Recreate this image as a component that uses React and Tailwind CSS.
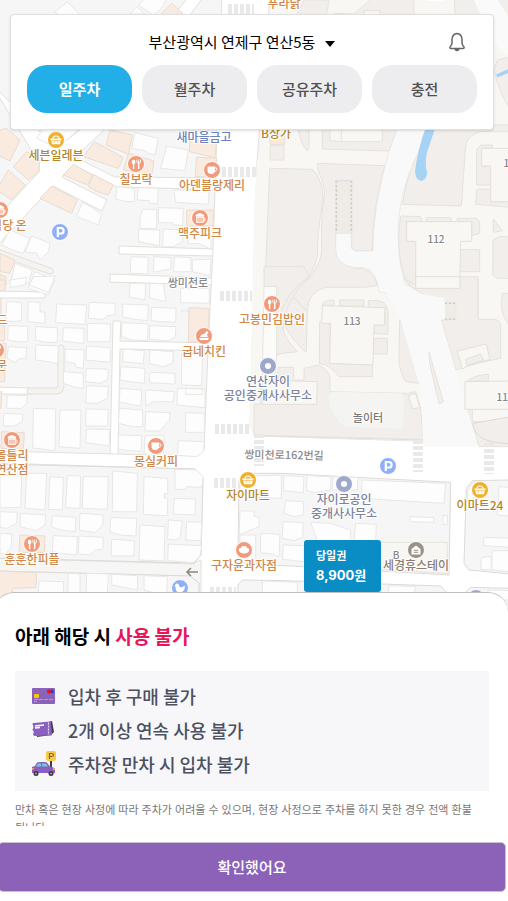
import React, { useState } from 'react';

const TABS = ['일주차', '월주차', '공유주차', '충전'];

const COLORS = {
  food: { pin: '#f09b7b', text: '#cf8748' },
  mart: { pin: '#efb02e', text: '#b3852a' },
  office: { pin: '#9da8cb', text: '#7b829c' },
  stay: { pin: '#9b9186', text: '#8b7b70' },
  parking: { pin: '#8fb0f6', text: '#8fb0f6' },
};

const PLACES = [
  { x: 56, y: 140, type: 'mart', icon: 'basket', lines: ['세븐일레븐'] },
  { x: 136, y: 164, type: 'food', icon: 'fork', lines: ['칠보락'] },
  { x: 212, y: 170, type: 'food', icon: 'cup', lines: ['아덴블랑제리'] },
  { x: 200, y: 218, type: 'food', icon: 'beer', lines: ['맥주피크'] },
  { x: 0, y: 210, type: 'food', icon: 'beer', lines: ['식당 온'], labelX: 9 },
  { x: 60, y: 232, type: 'parking', icon: 'p', lines: [] },
  { x: 204, y: 336, type: 'food', icon: 'chicken', lines: ['굽네치킨'] },
  { x: 272, y: 304, type: 'food', icon: 'fork', lines: ['고봉민김밥인'] },
  { x: -4, y: 350, type: 'food', icon: 'fork', lines: ['전문'] },
  { x: 268, y: 366, type: 'office', icon: 'dot', lines: ['연산자이', '공인중개사사무소'] },
  { x: 12, y: 440, type: 'food', icon: 'beer', lines: ['몰틀리', '연산점'] },
  { x: 156, y: 446, type: 'food', icon: 'cup', lines: ['몽실커피'] },
  { x: 248, y: 480, type: 'mart', icon: 'basket', lines: ['자이마트'] },
  { x: 344, y: 484, type: 'office', icon: 'dot', lines: ['자이로공인', '중개사사무소'] },
  { x: 388, y: 466, type: 'parking', icon: 'p', lines: [] },
  { x: 480, y: 490, type: 'mart', icon: 'basket', lines: ['이마트24'] },
  { x: 32, y: 544, type: 'food', icon: 'fork', lines: ['훈훈한피플'] },
  { x: 244, y: 550, type: 'food', icon: 'bread', lines: ['구자윤과자점'] },
  { x: 416, y: 550, type: 'stay', icon: 'house', lines: ['세경휴스테이'] },
  { x: 180, y: 588, type: 'parking', icon: 'duck', lines: [] },
  { x: 476, y: 598, type: 'office', icon: 'dot', lines: [] },
];

// Outlines are stored per map tile, three units to one pixel
const TILES = [
  {
    x: 0, y: 0,
    lots: ['165,35 202,6 238,42 200,70', '415,15 440,-10 505,-10 480,30 460,45', '390,42 410,20 435,42'],
    shops: ['480,45 515,10 548,40 530,60'],
  },
  {
    x: 0, y: 125,
    lots: [
      '110,40 150,-20 240,10 172,70', '405,23 475,40 465,90 442,85 440,78 395,70', '500,63 565,75 555,137 482,130',
      '350,185 403,190 403,230 368,228 347,222', '415,188 475,190 472,237 450,235 448,227 412,225', '522,195 627,197 625,238 527,232',
      '247,232 272,245 305,268 295,300 275,292 230,275', '427,253 470,253 470,310 420,310 420,280', '475,248 550,250 548,302 520,300 518,293 475,293',
      '415,313 480,315 478,362 440,355 415,350', '490,312 548,315 548,350 520,365 488,365', '565,310 633,305 633,372 595,355 565,357',
      '30,315 90,340 70,385 50,380 5,360', '95,333 150,355 145,380 120,405 110,385 75,380', '45,415 97,435 85,475 33,470',
      '105,440 165,465 145,510 85,490', '393,395 445,397 443,447 391,445', '462,395 513,398 513,432 470,440 460,440',
      '523,395 573,398 573,440 521,440', '577,405 633,402 630,452 577,440',
    ],
    shops: [
      '0,15 20,10 60,45 30,108 -10,90', '80,80 118,105 118,140 85,165 40,125', '25,135 75,180 35,225 -10,195',
      '330,15 397,30 385,88 318,60', '283,50 370,97 355,130 250,95', '220,118 278,150 262,180 190,150',
      '280,148 340,180 325,210 290,200 265,185', '155,183 232,225 215,265 120,220', '570,45 650,45 645,98 568,80',
      '385,85 462,108 455,150 370,135', '590,97 650,100 645,155 585,155', '560,255 640,255 640,303 560,303', '0,385 45,405 30,445 0,440',
      '0,448 18,455 18,480 0,480',
    ],
  },
  {
    x: 0, y: 280,
    lots: [
      '390,10 437,10 435,60 410,55 388,52', '450,10 490,12 498,65 475,60 448,52', '542,25 628,25 628,70 542,68',
      '20,65 65,67 65,122 38,125 18,122', '85,65 120,67 120,95 135,97 135,130 83,125', '170,72 260,75 255,133 167,128',
      '268,67 345,70 345,105 320,107 310,118 265,115', '368,72 445,75 443,122 420,120 368,112', '455,82 528,85 527,127 480,125 453,122',
      '25,137 83,139 83,185 50,185 23,180', '107,140 172,143 172,187 135,187 107,180', '190,143 252,145 252,190 225,188 188,183',
      '262,130 332,132 330,185 262,185', '365,128 445,132 443,182 395,180 365,170', '450,137 528,140 526,170 505,183 448,178',
      '25,200 80,203 78,235 55,237 45,248 22,235', '107,195 175,198 173,252 145,245 107,240', '195,208 253,210 250,265 228,262 225,250 195,245',
      '260,198 332,203 330,247 258,240', '370,207 433,212 430,252 400,248 367,245', '450,210 520,215 518,250 490,260 448,250',
      '545,220 608,222 605,317 545,315', '190,275 250,280 250,325 225,322 190,310', '258,265 325,268 323,300 300,310 257,305',
      '362,260 435,265 433,310 390,305 360,300', '450,277 525,280 525,312 448,308', '260,317 325,320 323,355 290,370 257,368',
      '360,325 425,330 423,378 400,375 358,365', '437,330 523,335 520,365 460,365 437,378', '533,325 615,327 615,383 530,375',
      '557,325 607,327 607,343 557,343', '22,345 83,347 80,370 65,385 20,385', '258,387 325,388 323,438 257,438',
      '358,385 428,390 428,440 400,440 355,430', '437,395 510,398 508,420 480,453 435,453', '557,398 613,400 613,457 557,457',
      '12,400 68,403 67,425 42,438 10,438', '100,385 167,387 165,512 98,504', '180,390 243,390 240,505 177,500',
      '260,447 328,449 328,498 257,488', '355,465 425,467 423,515 355,508', '435,467 492,467 490,525 432,522', '545,90 565,90 565,95 545,95',
      '30,0 80,-8 75,15 30,22', '100,-10 165,-12 145,38 88,15',
    ],
    shops: ['567,83 627,85 625,187 565,185', '-5,0 15,0 15,32 -5,32', '-5,55 3,55 3,100 -5,100', '-5,135 14,135 14,182 -5,182', '-5,190 18,190 14,305 -5,305', '-5,335 5,335 3,385 -5,385'],
  },
  {
    x: 0, y: 430,
    lots: [
      '535,32 613,35 610,65 590,80 532,76', '0,135 65,137 62,232 0,234', '80,130 140,130 135,240 75,235', '150,140 190,143 187,240 145,238',
      '202,137 242,138 240,235 197,233', '250,140 325,140 322,238 247,235', '338,123 412,130 410,245 337,245',
      '432,140 503,145 503,190 492,192 492,203 503,205 502,257 430,253', '525,118 590,120 610,142 605,172 560,170 556,178 525,178',
      '523,205 587,207 585,255 520,252', '0,245 52,247 50,280 20,295 0,292', '62,250 137,255 135,285 110,302 60,290',
      '157,257 228,262 225,305 180,300 155,290', '240,250 310,255 308,285 285,308 238,300', '332,263 410,265 408,318 360,315 330,305',
      '420,285 495,290 492,393 417,390', '505,270 547,273 540,325 525,330 503,328', '560,275 605,277 603,332 557,330',
      '335,328 403,332 402,378 333,378', '505,342 605,347 600,378 580,398 503,392', '160,317 232,320 230,375 185,370 157,365',
      '237,318 310,322 308,358 285,360 270,375 235,372', '0,310 35,312 33,355 15,372 0,370', '117,453 190,455 190,500 115,500',
      '205,430 240,432 240,500 203,500', '260,430 325,432 322,500 258,500', '335,433 413,437 412,480 385,475 335,465',
      '432,437 502,440 500,500 432,480',
    ],
    shops: ['5,5 73,8 70,58 3,55', '60,315 135,318 133,368 57,367', '-5,423 110,428 108,473 38,475 35,540 -5,540'],
  },
  {
    x: 254, y: 430,
    lots: [
      '-42,140 82,135 82,205 -42,200', '-42,243 0,243 0,258 15,262 15,290 -45,315', '90,137 150,140 148,188 88,182', '160,137 230,140 230,180 180,188 157,180',
      '238,140 312,143 310,180 235,180', '95,212 148,215 148,255 120,260 90,250', '325,150 575,160 570,220 320,205', '468,260 540,263 540,277 468,275',
      '567,255 580,257 580,283 567,283', '87,275 148,278 146,322 120,332 85,325', '170,277 230,280 290,300 290,332 190,332', '305,280 367,283 365,332 300,332',
      '20,310 78,313 75,380 55,372 20,368', '88,345 150,347 150,395 85,388', '-42,315 5,315 5,400 -42,400', '735,170 770,172 770,258 730,255',
      '690,322 770,325 770,352 688,347', '715,362 770,362 770,425 713,420', '695,380 712,380 712,420 680,418 682,385',
      '25,453 130,457 130,500 25,490', '310,465 380,467 380,500 310,500', '405,467 485,470 480,500 400,500', '702,480 770,482 770,510 702,510', '640,185 660,153 675,190 640,220',
    ],
    shops: [],
  },
];

const PinIcon = ({ name }) => {
  switch (name) {
    case 'basket':
      return (
        <g>
          <path d="M-5.500-1.500H5.500V0H4.800L4 4.300H-4L-4.800 0H-5.500Z" fill="#fff" />
          <path d="M-3.300-1.500Q-2.500-4 0-4T3.300-1.500" fill="none" stroke="#fff" strokeWidth="1.200" />
          <path d="M-4.500.5H4.500M-1.700 1V3M1.700 1V3" stroke="#efb02e" strokeWidth=".6" />
        </g>
      );
    case 'fork':
      return (
        <g stroke="#fff" strokeLinecap="round" fill="none">
          <ellipse cx="-2.4" cy="-2" rx="1.8" ry="2.2" fill="#fff" stroke="none" />
          <path d="M-2.4 0V4.5M2.7-1V4.5" strokeWidth="1.4" />
          <path d="M.9-4V-1.6Q2.7 1 4.5-1.6V-4M2.7-4V0" strokeWidth=".9" />
        </g>
      );
    case 'cup':
      return (
        <g>
          <path d="M-4.5-3.5H3V0Q3 4-.8 4T-4.5 0Z" fill="#fff" />
          <path d="M3-2.2Q5.5-2.5 5-.6T2.5 1.4" fill="none" stroke="#fff" />
        </g>
      );
    case 'beer':
      return (
        <g>
          <path d="M-4-1.5Q-5-4-2.5-4 0-6 2-4 4.5-4 4-1.5Z" fill="#fff" />
          <path d="M-3.2-.8V4.2H3.2V-.8Z" fill="none" stroke="#fff" strokeWidth="1.2" />
          <path d="M-1 0V3M1 0V3M3.5 0H5V3H3.5" fill="none" stroke="#fff" strokeWidth=".9" />
        </g>
      );
    case 'chicken':
      return (
        <g fill="#fff">
          <path d="M-4 1Q-3-2 0-2L3-5 4.5-3.5 3-1.5Q4 0 3.5 1.2Z" />
          <path d="M-5 2H5L4 4H-4Z" />
        </g>
      );
    case 'bread':
      return <path d="M-5 1Q-6-2-3-2-2-5 0-3.4 2.5-5 3-2 6-2 5 1 4 3.6 0 3.4T-5 1Z" fill="#fff" />;
    case 'house':
      return (
        <g>
          <path d="M-4.5-1 0-4.5 4.5-1V4.5H-4.5Z" fill="#fff" />
          <path d="M-2.3.3H2.3M-2.3 2.3H2.3" stroke="#9b9186" />
        </g>
      );
    case 'duck':
      return <path d="M-5.5-2-3.8-4.4Q-1-5-.7-1.6 2 .5 4.8-2.4 5.5 4 0 4.6-5 4.3-4.4-1Z" fill="#fff" />;
    case 'p':
      return <path d="M-2.2 5V-4H1Q3.6-4 3.6-1.2T1 1.5H-2" fill="none" stroke="#fff" strokeWidth="2.2" />;
    default:
      return <circle r="3" fill="#fff" />;
  }
};

const Label = ({ x, y, color, size = 12, weight = 500, children, ...rest }) => (
  <text
    x={x}
    y={y + 4}
    fill={color}
    fontSize={size}
    fontWeight={weight}
    textAnchor="middle"
    stroke="#ffffff"
    strokeWidth="2"
    strokeLinejoin="round"
    paintOrder="stroke"
    {...rest}
  >
    {children}
  </text>
);

const Tile = ({ x, y, children }) => <g transform={`translate(${x} ${y}) scale(0.33333)`}>{children}</g>;

const StreetMap = () => (
  <svg
    viewBox="0 0 508 620"
    preserveAspectRatio="xMinYMin slice"
    className="absolute inset-0 h-full w-full font-['Noto_Sans_CJK_KR',sans-serif]"
    role="img"
    aria-label="연산5동 지도"
  >
    <rect width="508" height="620" fill="#f6f6f6" />

    {/* Main road and the side streets */}
    <g fill="#ffffff" stroke="#e2e0db" strokeWidth="1">
      <path d="M-5 90 39 163V172L-5 219V248L53 186 102 211 107 200 62 177 73 165 117 187 230 190V178L115 177 75 157 104 130 205-5H190L80 130 56 148 0 92Z" />
      <path d="M119 246 215 249V256L119 254ZM110 274 215 278V285L110 282ZM-5 291 45 292V298H-5ZM-5 387 31 388V394H-5Z" />
      <path d="M113 321H121L120 341 215 343V351L120 349 118 460H110Z" />
      <path d="M-5 451 197 456 204 450 208 350 213 250 217 130 222-5H270L257 162 250 425 256 436 515 444V620H-5V571L190 576 199 583V620H201V560L194 563-5 558V463L195 469 203 478 201 555 194 563V564L-5 558Z" />
    </g>
    <g fill="#f6f6f6" stroke="#dddad5" strokeWidth="1">
      <path d="M-5 464 195 469 203 478 201 555 194 563-5 558ZM-5 571 190 576 199 583V620H-5Z" />
    </g>
    <g fill="none" strokeLinecap="round">
      <path d="M-3 252 50 271M30 391H56Q61 391 61 385V348" stroke="#e4e1da" strokeWidth="7" />
      <path d="M-3 252 50 271M30 391H56Q61 391 61 385V348" stroke="#f5f3ef" strokeWidth="5" />
    </g>

    {/* Apartment grounds on the east side */}
    <path d="M274-5H515V447L423 441 256 436Q248 430 250 420L254 210 257 162 263 142V60Z" fill="#f8f7f3" />
    <path d="M254 435.500 424 440" stroke="#dedbd2" />
    <Tile x={254} y={0}>
      <g fill="#f1eeeb" stroke="#e7e3de" strokeWidth="3">
        <path d="M150 0H225L215 60H120ZM240 40 300 42 360-10H480V60H240ZM600-10H660L710 60H605ZM730 180Q750 175 770 170V330Q735 280 720 210ZM725-10H770V90Z" />
      </g>
      <path d="M655-10H725L770 60V170L720 130Z" fill="#fafafa" />
      <path d="M728 228 770 210" stroke="#a6d2f4" strokeWidth="10" />
      <path d="M330 32H378V60H330Z" fill="#f8f7f3" stroke="#e2e0db" strokeWidth="3" />
    </Tile>
    <Tile x={254} y={125}>
      <g fill="#f1eeeb" stroke="#e6e2dc" strokeWidth="3">
        <path d="M47 130 175 133Q206 160 207 225 190 320 190 395 180 440 145 482L110 530 90 590 75 690H30L33 480Z" />
        <path d="M48 62H90V105H48ZM132 10H165V70L160 78Q140 60 132 10Z" />
        <path d="M190 115 393 122Q355 250 355 378H305L293 370V167H247V370Q250 420 300 428 360 428 370 480V482L330 487H215Q160 500 160 560L118 515Q130 490 165 460 205 410 203 370 200 280 212 200 205 160 190 130Z" />
        <path d="M205-10H440L405 78 205 72Z" />
        <path d="M530 0H770V20H680Q634 30 634 75L622 243 445 238Q470 90 530 0Z" />
        <path d="M440 273 500 275 505 290H457V348H485V495H540L540 510Q470 500 455 465 422 380 440 273ZM517 278H590L595 290H517ZM610 280H668L677 290V325L653 332V290H610ZM617 374H677V440H617ZM617 458H672V580H617Z" />
        <path d="M668 75 680 60H715V70H683V123H710V180H668ZM668 193H710V230H770V247L665 238ZM718 282 745 318 718 322ZM717 345Q730 330 770 336V460H730L716 450Z" />
      </g>
      <path d="M455-10H545Q440 150 433 300 428 400 455 480L580 520H470L375 500Q365 428 330 428H300Q245 420 245 370V325H292V370L305 378H357Q355 250 405 80L430 10Z" fill="#f9f9fa" stroke="#e2e2e3" strokeWidth="2" />
      <path d="M228-10H385V50H262L228 47ZM262-10V50" fill="#f8f7f3" stroke="#e7e3de" strokeWidth="3" />
      <path d="M247 167H294V324H247Z" fill="#efece7" />
      <path d="M247 167V324M292 167V324" stroke="#cfccc8" strokeWidth="5" strokeDasharray="7 6" />
      <path d="M245 167H296" stroke="#dedfe3" strokeWidth="5" />
      <path d="M516 5Q492 70 483 138 484 165 502 168 520 163 519 140 512 122 518 85L545 5Z" fill="#a6d2f4" />
      <g fill="#f8f7f3" stroke="#e4e0da" strokeWidth="3">
        <path d="M458 290H653V349H620L617 487H485V349H458ZM683 70H770V230H710V123H683Z" />
        <path d="M48 30H92V58H48Z" fill="#fbe9da" />
      </g>
    </Tile>
    <Tile x={254} y={280}>
      <g fill="#f1eeeb" stroke="#e6e2dc" strokeWidth="3">
        <path d="M30-40H150L165-10Q95 40 82 100 75 160 130 215L68 222V20H30Z" />
        <path d="M118 52 160 95 157 215H152Q90 150 90 125 95 80 118 52Z" />
        <path d="M205 75Q205 60 240 60V77ZM257 60H330V78H257ZM343 62Q402 55 402 95V163L360 160V135L393 133V83H343ZM360 175H400V222H358ZM197 125 228 130 228 250 355 255V290H255Q230 255 196 250Z" />
        <path d="M72 262H118L120 300H150V265L195 255Q225 270 228 295L228 335 460 340 485 335 500 385 508 478 0 466V372H20V300H72Z" />
        <path d="M437 120Q455 125 480 200L508 312 455 305Q435 270 435 240ZM525 215 568 365 555 372 527 250Z" />
        <path d="M500 25H618V-10H672V118H720Q740 120 740 140V235Q660 250 605 270L562 120 605 118V68H570V52Q490 55 450-5ZM745 40H770V140Q742 110 742 70Z" />
        <path d="M640 303Q660 285 703 283V303ZM640 388H655V425H770V500H675Z" />
      </g>
      <path d="M375 0H435Q470 45 572 52V118H560L605 270 668 480V500H507V480L500 330 440 120Z" fill="#f9f9fa" />
      <path d="M525 215 568 365 555 372 527 250Z" fill="#f1eeeb" stroke="#e6e2dc" strokeWidth="3" />
      <g fill="#f8f7f3" stroke="#e4e0da" strokeWidth="3">
        <path d="M205 77 393 83 391 135H360L357 255 227 250 230 130H203ZM110 303 190 305 188 373H25V302ZM463 347 485 340 497 383 475 387ZM485-10H618V25H485ZM633 305 770 303V388H633ZM610 213 697 192 708 238 638 258 625 268Z" />
        <path d="M635 238 680 222 688 240 640 257Z" fill="#f1eeeb" />
      </g>
      <path d="M30 20H68V222L62 300H25Z" fill="#fbfbfa" stroke="#e6e4e0" strokeWidth="3" />
      <path d="M238 335 440 340Q450 340 450 355L447 447 275 440Q255 430 250 415L225 378V345Z" fill="#f4f4f3" />
      <path d="M573 70H605V117H573Z" fill="#efece7" />
      <path d="M573 70H605M573 117H605" stroke="#cfccc8" strokeWidth="4" strokeDasharray="6 6" />
    </Tile>

    <Tile x={254} y={430}>
      <path d="M657-20Q660 40 770 41V-40Z" fill="#f1eeeb" stroke="#dedbd2" strokeWidth="3" />
      <g fill="#f6f6f6" stroke="#dddad5" strokeWidth="3">
        <path d="M-45 150-30 130 80 130 590 157 585 435-30 400-48 380ZM-48 465-35 450 90 452 560 468 580 490V560H-48ZM637 175 655 152 770 150V432L645 420 630 400ZM632 490 650 472 770 475V560H632Z" />
      </g>
      <path d="M380 337H580V430L380 418Z" fill="#f8f6f2" stroke="#e7e3de" strokeWidth="3" />
    </Tile>

    {TILES.map((tile) => (
      <Tile key={`${tile.x}-${tile.y}`} x={tile.x} y={tile.y}>
        {tile.lots.map((points) => (
          <polygon key={points} points={points} fill="#fdfdfd" stroke="#e8e7e5" strokeWidth="3" />
        ))}
        {tile.shops.map((points) => (
          <polygon key={points} points={points} fill="#f9ebdf" stroke="#e9dccf" strokeWidth="3" />
        ))}
      </Tile>
    ))}

    {/* Crosswalks */}
    <g stroke="#e9e9e9" strokeWidth="10" strokeDasharray="4 2">
      <path d="M228 9H254M222 172H256M220 296H252M215 429H249M214 483H236M210 592H236" />
      <path d="M418 440V472M489 443V474M259 434V466" />
    </g>

    {PLACES.map((place) => (
      <g key={`${place.x}-${place.y}`}>
        <g transform={`translate(${place.x} ${place.y})`}>
          <circle r="8.500" fill={COLORS[place.type].pin} stroke="#ffffff" strokeWidth="1" />
          <PinIcon name={place.icon} />
        </g>
        {place.lines.map((line, i) => (
          <Label key={line} x={place.labelX ?? place.x} y={place.y + 16 + i * 14} color={COLORS[place.type].text}>
            {line}
          </Label>
        ))}
      </g>
    ))}

    <Label x={284} y={4} color="#cf8748">푸라닭</Label>
    <Label x={276} y={134} color="#b3852a">B상가</Label>
    <Label x={204} y={138} color="#6c82bb">새마을금고</Label>
    <Label x={2} y={321} color="#cf8748">드</Label>
    <Label x={188} y={283} color="#8a8a8a" size={11}>쌍미천로</Label>
    <Label x={284} y={455} color="#8a8a8a" size={11} transform="rotate(1 284 455)">쌍미천로162번길</Label>
    <Label x={368} y={418} color="#777777" size={11}>놀이터</Label>
    <Label x={436} y={239} color="#858585" size={10}>112</Label>
    <Label x={352} y={321} color="#858585" size={10}>113</Label>
    <Label x={505} y={397} color="#858585" size={10}>115</Label>
    <Label x={512} y={163} color="#858585" size={10}>111</Label>
    <Label x={436} y={-4} color="#858585" size={10}>110</Label>
    <Label x={396} y={555} color="#8b8680" size={10}>B</Label>
    <path d="M198 572H187M191 568 187 572 191 576" fill="none" stroke="#8f877c" strokeWidth="1.500" />

    {/* Price marker */}
    <g fill="#ffffff" fontWeight="700">
      <path d="M335 590H349L342 598Z" fill="#0579ab" />
      <rect x="304" y="540" width="77" height="52" rx="3" fill="#0a8dc4" />
      <text x="316" y="560" fontSize="11">당일권</text>
      <text x="316" y="580" fontSize="13" className="font-['Inter','Noto_Sans_CJK_KR',sans-serif]">8,900원</text>
    </g>
  </svg>
);

const CardIcon = () => (
  <svg viewBox="0 0 26 26" className="h-[26px] w-[26px]" aria-hidden="true">
    <rect x="1" y="5" width="23" height="16" rx="1" fill="#8a63b8" />
    <rect x="3" y="11" width="5" height="4" rx="1" fill="#ffc400" />
    <circle cx="21" cy="8.500" r="2" fill="#1d46d2" />
    <circle cx="18" cy="8.500" r="2" fill="#e8101c" />
    <path d="M3 16.500H22M3 18.500H6" stroke="#b79bd6" strokeWidth="1" strokeDasharray="4 1" />
  </svg>
);

const TicketIcon = () => (
  <svg viewBox="0 0 26 26" className="h-[26px] w-[26px]" aria-hidden="true">
    <path d="M5 9 21 4 23 15 20 18 6 20Z" fill="#43364f" />
    <path d="M1.500 7Q1 6 3 6L19 4.500Q20 4.500 20 6L21 17Q21 18.500 20 18.500L4 19Q2 19 2 17L3 15 1.500 13 2.500 10Z" fill="#8a5fbd" />
    <path d="M4 9 13 8M4 11 9 10.500" stroke="#fff" strokeWidth="1.500" />
    <path d="M17.500 5.500V18" stroke="#e8dcf5" strokeWidth="1.200" strokeDasharray="2 1" />
  </svg>
);

const CarIcon = () => (
  <svg viewBox="0 0 26 26" className="h-[26px] w-[26px]" aria-hidden="true">
    <path d="M20 9V23" stroke="#3d3d48" strokeWidth="2" />
    <rect x="15" y="0" width="10" height="10" rx="2" fill="#f8c94b" />
    <path d="M18.500 8V2.500H20.500Q22.500 2.500 22.500 4T20.500 5.500H18.500" fill="none" stroke="#866436" strokeWidth="1.200" />
    <path d="M1 22V16L4 15 6 11.500Q7 11 9 11H14Q16 11 17 13L19 15.500Q24 16 24 19V22Z" fill="#8a5fbd" />
    <path d="M5 15.500 7 12.500H10V15.500ZM11 12.500H14Q15.500 12.500 17 15.500H11Z" fill="#79c7df" />
    <path d="M1 17H3V18.500H1ZM22 17H24V19H22Z" fill="#f9a63c" />
    <circle cx="5" cy="22.500" r="2.500" fill="#363642" />
    <circle cx="20" cy="22.500" r="2.500" fill="#363642" />
    <circle cx="5" cy="22.500" r="1" fill="#a8a8b2" />
    <circle cx="20" cy="22.500" r="1" fill="#a8a8b2" />
  </svg>
);

const RULES = [
  { text: '입차 후 구매 불가', Icon: CardIcon },
  { text: '2개 이상 연속 사용 불가', Icon: TicketIcon },
  { text: '주차장 만차 시 입차 불가', Icon: CarIcon },
];

const TopBar = () => {
  const [active, setActive] = useState(0);

  return (
    <header className="relative mx-[10px] mt-[14px] mr-[14px] rounded-sm border border-[#e0e0e2] bg-white px-4 pb-4 shadow-sm">
      <div className="relative flex h-[50px] items-center justify-center pt-1 pr-5">
        <button type="button" className="flex items-center gap-[10px] text-[15px] leading-6 text-black">
          부산광역시 연제구 연산5동
          <svg viewBox="0 0 10 6" className="mt-1 h-[6px] w-[10px]" aria-hidden="true">
            <path d="M0 0H10L5 6Z" fill="#000" />
          </svg>
        </button>
        <button type="button" aria-label="알림" className="absolute right-[10px] flex h-5 w-5 items-center justify-center">
          <svg viewBox="0 0 20 20" className="h-5 w-5" fill="none" stroke="#666" strokeWidth="1.500" strokeLinejoin="round" aria-hidden="true">
            <path d="M10 1.500Q5.500 2 5 7V11Q5 13 3 15 2.500 16.500 4 16.500H16Q17.500 16.500 17 15 15 13 15 11V7Q14.500 2 10 1.500Z" />
            <path d="M8 17Q10 20 12 17" fill="#666" />
          </svg>
        </button>
      </div>
      <nav className="grid grid-cols-4 gap-[10px]">
        {TABS.map((tab, i) => (
          <button
            key={tab}
            type="button"
            onClick={() => setActive(i)}
            className={
              i === active
                ? 'h-12 rounded-[20px] bg-[#22aee6] text-[15px] font-bold text-white'
                : 'h-12 rounded-[20px] bg-[#ededf0] text-[15px] font-medium text-[#505050]'
            }
          >
            {tab}
          </button>
        ))}
      </nav>
    </header>
  );
};

const NoticeSheet = () => (
  <section className="relative -mt-5 -ml-[6px] rounded-t-[20px] border-t border-[#bdbdbd] bg-white pt-[29px] pb-[9px]">
    <div className="pr-[19px] pl-[21px]">
      <h2 className="text-[19px] leading-7 font-bold text-black">
        아래 해당 시 <span className="text-[#ea1558]">사용 불가</span>
      </h2>
      <ul className="mt-[21px] bg-[#f7f7fa] px-4 pt-2 pb-[10px]">
        {RULES.map(({ text, Icon }) => (
          <li key={text} className="flex h-[34px] items-center gap-[11px] text-[18px] font-medium text-[#4c5160]">
            <Icon />
            {text}
          </li>
        ))}
      </ul>
      <p className="mt-[10px] h-[25px] overflow-hidden font-['Liberation_Sans','Noto_Sans_CJK_KR',sans-serif] text-[11px] leading-[18px] break-keep text-[#777777]">
        만차 혹은 현장 사정에 따라 주차가 어려울 수 있으며, 현장 사정으로 주차를 하지 못한 경우 전액 환불
        <wbr />
        됩니다.
      </p>
    </div>
    <div className="mt-4 mr-[2px] ml-1">
      <button type="button" className="h-[50px] w-full rounded-[5px] border border-[#c8c3cc] bg-[#8c62b9] text-[15px] font-medium text-white">
        확인했어요
      </button>
    </div>
  </section>
);

export default function App() {
  return (
    <div className="flex min-h-screen flex-col overflow-x-hidden bg-white font-['Noto_Sans_CJK_KR',sans-serif]">
      <main className="relative flex min-h-[360px] flex-1 flex-col overflow-hidden">
        <StreetMap />
        <TopBar />
      </main>
      <NoticeSheet />
    </div>
  );
}
